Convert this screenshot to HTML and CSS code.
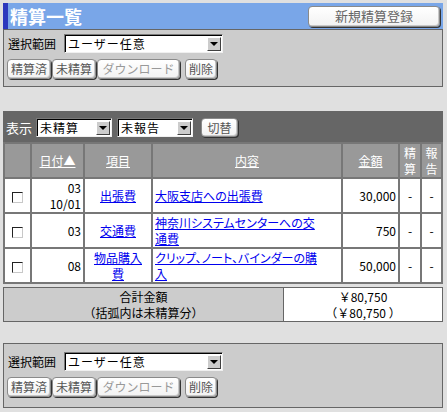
FILE: index.html
```html
<!DOCTYPE html>
<html lang="ja">
<head>
<meta charset="utf-8">
<title>精算一覧</title>
<link rel="stylesheet" href="styles.css">
</head>
<body>
<div class="page">
  <div class="titlebar">
    <h1 class="title">精算一覧</h1>
    <span class="btn btn-new">新規精算登録</span>
  </div>

  <div class="panel">
    <div class="row">
      <span class="label">選択範囲</span>
      <span class="select select-wide"><span class="select-text">ユーザー任意</span><span class="select-arrow"></span></span>
    </div>
    <div class="row btnrow">
      <span class="btn">精算済</span>
      <span class="btn">未精算</span>
      <span class="btn btn-dim btn-dl">ダウンロード</span>
      <span class="btn btn-del">削除</span>
    </div>
  </div>

  <div class="list">
    <div class="toolbar">
      <span class="toolbar-label">表示</span>
      <span class="select select-small"><span class="select-text">未精算</span><span class="select-arrow"></span></span>
      <span class="select select-small"><span class="select-text">未報告</span><span class="select-arrow"></span></span>
      <span class="btn btn-switch">切替</span>
    </div>
    <table class="grid">
      <colgroup>
        <col class="c-chk"><col class="c-date"><col class="c-item"><col class="c-desc"><col class="c-amt"><col class="c-flag"><col class="c-flag2">
      </colgroup>
      <thead>
        <tr>
          <th></th>
          <th><a class="hlink">日付▲</a></th>
          <th><a class="hlink">項目</a></th>
          <th><a class="hlink">内容</a></th>
          <th><a class="hlink">金額</a></th>
          <th class="stack">精<br>算</th>
          <th class="stack">報<br>告</th>
        </tr>
      </thead>
      <tbody>
        <tr>
          <td class="chk"><span class="checkbox"></span></td>
          <td class="date">03<br>10/01</td>
          <td class="item"><a class="link">出張費</a></td>
          <td class="desc"><a class="link">大阪支店への出張費</a></td>
          <td class="amt">30,000</td>
          <td class="flag">-</td>
          <td class="flag">-</td>
        </tr>
        <tr>
          <td class="chk"><span class="checkbox"></span></td>
          <td class="date">03</td>
          <td class="item"><a class="link">交通費</a></td>
          <td class="desc"><a class="link">神奈川システムセンターへの交<br>通費</a></td>
          <td class="amt">750</td>
          <td class="flag">-</td>
          <td class="flag">-</td>
        </tr>
        <tr>
          <td class="chk"><span class="checkbox"></span></td>
          <td class="date">08</td>
          <td class="item"><a class="link">物品購入<br>費</a></td>
          <td class="desc"><a class="link">クリップ、ノート、バインダーの購<br>入</a></td>
          <td class="amt">50,000</td>
          <td class="flag">-</td>
          <td class="flag">-</td>
        </tr>
      </tbody>
    </table>
  </div>
  <table class="total">
    <tr>
      <td class="total-label">合計金額<br>（括弧内は未精算分）</td>
      <td class="total-value">￥80,750<br>（￥80,750 ）</td>
    </tr>
  </table>

  <div class="panel panel-bottom">
    <div class="row">
      <span class="label">選択範囲</span>
      <span class="select select-wide"><span class="select-text">ユーザー任意</span><span class="select-arrow"></span></span>
    </div>
    <div class="row btnrow">
      <span class="btn">精算済</span>
      <span class="btn">未精算</span>
      <span class="btn btn-dim btn-dl">ダウンロード</span>
      <span class="btn btn-del">削除</span>
    </div>
  </div>
</div>
</body>
</html>
```

FILE: styles.css
```css
html, body {
  margin: 0;
  padding: 0;
  background: #e0e0e0;
}
body {
  font-family: "Noto Sans CJK JP", "Noto Sans", sans-serif;
  font-size: 12px;
  line-height: 14px;
  color: #000;
}
.page {
  width: 440px;
  padding: 3px 0 0 3px;
}

/* title bar */
.titlebar {
  height: 26px;
  background: #79a6e8;
  border-left: 5px solid #2c38bd;
  display: flex;
  align-items: center;
  justify-content: space-between;
  box-sizing: border-box;
  padding-right: 3px;
}
.title {
  margin: 0 0 0 2px;
  font-size: 18px;
  line-height: 20px;
  font-weight: bold;
  color: #fff;
}

/* buttons */
.btn {
  display: inline-flex;
  align-items: center;
  justify-content: center;
  box-sizing: border-box;
  height: 20px;
  padding: 0 3px;
  background: linear-gradient(#ffffff, #f2f2f2);
  border: 1px solid #8a8a8a;
  border-radius: 4px;
  box-shadow: 1px 1px 0 #333, inset -1px -1px 0 #c8c8c8;
  color: #555;
  font-size: 12px;
  line-height: 14px;
  white-space: nowrap;
}
.btn-new {
  width: 132px;
  height: 21px;
  color: #666;
  font-size: 13px;
}
.btn-dim { color: #999; }
.btn-dl { width: 83px; }
.btn-del { margin-left: 4px; }
.btn-switch {
  margin-left: 8px;
  width: 37px;
  height: 19px;
}

/* panel */
.panel {
  background: #cccccc;
  border: 1px solid #666;
  padding: 4px 4px 7px 4px;
  display: flex;
  flex-direction: column;
  gap: 6px;
}
.panel-bottom {
  margin-top: 21px;
  padding: 8px 4px 10px 4px;
}
.row {
  display: flex;
  align-items: center;
}
.btnrow {
  margin-left: -1px;
  gap: 1px;
}
.label {
  width: 56px;
}

/* faux select */
.select {
  display: inline-flex;
  align-items: center;
  box-sizing: border-box;
  height: 19px;
  background: #fff;
  border: 1px solid;
  border-color: #7a7a7a #f0f0f0 #f0f0f0 #7a7a7a;
  box-shadow: inset 1px 1px 0 #000;
  padding: 1px 1px 1px 3px;
  color: #000;
}
.select-wide { width: 159px; }
.select-small { width: 76px; margin-left: 4px; }
.select-small + .select-small { margin-left: 5px; }
.select-text {
  flex: 1;
  font-size: 12px;
  line-height: 14px;
  letter-spacing: 1px;
  color: #000;
}
.select-arrow {
  width: 14px;
  height: 14px;
  box-sizing: border-box;
  background: #cccccc;
  border: 1px solid;
  border-color: #fff #404040 #404040 #fff;
  display: flex;
  align-items: center;
  justify-content: center;
}
.select-arrow::after {
  content: "";
  border-left: 4px solid transparent;
  border-right: 4px solid transparent;
  border-top: 4px solid #000;
}

/* list */
.list {
  margin-top: 24px;
  background: #666;
}
.toolbar {
  height: 33px;
  display: flex;
  align-items: center;
  padding-left: 3px;
  box-sizing: border-box;
  color: #fff;
}
.toolbar-label {
  font-size: 13px;
}
.grid {
  width: 440px;
  table-layout: fixed;
  border-collapse: separate;
  border-spacing: 2px;
  margin: -2px 0 0 0;
  background: #777;
}
.c-chk { width: 25px; }
.c-date { width: 51px; }
.c-item { width: 66px; }
.c-desc { width: 188px; }
.c-amt { width: 55px; }
.c-flag { width: 20px; }
.c-flag2 { width: 19px; }
.grid th {
  background: #999;
  height: 33px;
  padding: 0;
  font-weight: normal;
  color: #fff;
  text-align: center;
}
.hlink {
  color: #fff;
  text-decoration: underline;
}
.grid th.stack {
  line-height: 16px;
  font-size: 12px;
}
.grid td {
  background: #fff;
  height: 33px;
  padding: 0 2px;
  line-height: 16px;
  vertical-align: middle;
}
.chk { text-align: center; }
.checkbox {
  display: inline-block;
  width: 11px;
  height: 11px;
  box-sizing: border-box;
  border: 1px solid;
  border-color: #222 #c8c8c8 #c8c8c8 #222;
  background: #fff;
  vertical-align: middle;
}
.date { text-align: right; }
.item { text-align: center; }
.desc {
  text-align: left;
  white-space: nowrap;
  font-feature-settings: "palt";
}
.amt { text-align: right; }
.flag { text-align: center; }
.link {
  color: #0000ee;
  text-decoration: underline;
}

/* total */
.total {
  width: 440px;
  margin-top: 3px;
  border-collapse: collapse;
  border: 1px solid #666;
}
.total td {
  border: 1px solid #666;
  height: 33px;
  padding: 0;
  line-height: 16px;
  text-align: center;
  vertical-align: middle;
}
.total-label {
  width: 279px;
  background: #ccc;
}
.total-value {
  background: #fff;
}
```
